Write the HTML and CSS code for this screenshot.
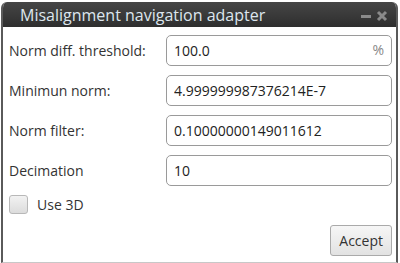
FILE: index.html
```html
<!DOCTYPE html>
<html lang="en">
<head>
    <meta charset="UTF-8">
    <meta name="viewport" content="width=device-width, initial-scale=1.0">
    <title>Misalignment navigation adapter</title>
    <link rel="stylesheet" href="styles.css">
</head>
<body>
    <div class="window">
        <div class="titlebar">
            <span class="title">Misalignment navigation adapter</span>
            <div class="controls">
                <svg class="ctrl" width="12" height="12" viewBox="0 0 12 12">
                    <rect x="1" y="5" width="10" height="3" fill="#8a8a8a"/>
                </svg>
                <svg class="ctrl" width="12" height="12" viewBox="0 0 12 12">
                    <path d="M2 2 L10 10 M10 2 L2 10" stroke="#8a8a8a" stroke-width="3"/>
                </svg>
            </div>
        </div>
        <div class="content">
            <div class="form">
                <label>Norm diff. threshold:</label>
                <div class="field">
                    <input type="text" value="100.0">
                    <span class="unit">%</span>
                </div>
                <label>Minimun norm:</label>
                <div class="field"><input type="text" value="4.999999987376214E-7"></div>
                <label>Norm filter:</label>
                <div class="field"><input type="text" value="0.10000000149011612"></div>
                <label>Decimation</label>
                <div class="field"><input type="text" value="10"></div>
            </div>
            <div class="check">
                <span class="box"></span>
                <span>Use 3D</span>
            </div>
            <div class="footer">
                <button class="accept">Accept</button>
            </div>
        </div>
    </div>
</body>
</html>
```

FILE: styles.css
```css
body {
    margin: 0;
    background-color: #fff;
    font-family: "Open Sans", "Noto Sans", sans-serif;
}

.window {
    margin: 2px 2px 0 1px;
    height: 261px;
    box-sizing: border-box;
    border-left: 2px solid #5a5a5a;
    border-right: 2px solid #5a5a5a;
    border-bottom: 1px solid #c8c8c8;
    border-radius: 6px 6px 0 0;
    display: flex;
    flex-direction: column;
    background-color: #fff;
    overflow: hidden;
}

.titlebar {
    height: 25px;
    flex: none;
    background: linear-gradient(#464646, #2e2e2e);
    display: flex;
    align-items: center;
    justify-content: space-between;
    padding: 0 8px 0 17px;
}

.title {
    color: #dde6ee;
    font-size: 16px;
}

.controls {
    display: flex;
    gap: 4px;
    margin-top: 2px;
}

.content {
    flex: 1;
    padding: 8px 4px 6px 6px;
    display: flex;
    flex-direction: column;
    color: #333;
    font-size: 14px;
}

.form {
    display: grid;
    grid-template-columns: 157px 1fr;
    row-gap: 9px;
    align-items: center;
}

.field {
    position: relative;
}

.field input {
    width: 100%;
    height: 31px;
    box-sizing: border-box;
    border: 1px solid #9a9a9a;
    border-radius: 5px;
    padding: 0 7px;
    font-family: inherit;
    font-size: 14px;
    color: #222;
}

.unit {
    position: absolute;
    right: 8px;
    top: 5px;
    color: #888;
}

.check {
    display: flex;
    align-items: center;
    gap: 9px;
    margin-top: 9px;
}

.box {
    width: 19px;
    height: 19px;
    box-sizing: border-box;
    border: 1px solid #b8b8b8;
    border-radius: 3px;
    background: linear-gradient(#f2f2f2, #dcdcdc);
}

.footer {
    margin-top: auto;
    display: flex;
    justify-content: flex-end;
}

.accept {
    height: 31px;
    padding: 0 8px;
    font-family: inherit;
    font-size: 14px;
    color: #333;
    border: 1px solid #aaa;
    border-radius: 3px;
    background: linear-gradient(#f6f6f6, #e2e2e2);
}
```
